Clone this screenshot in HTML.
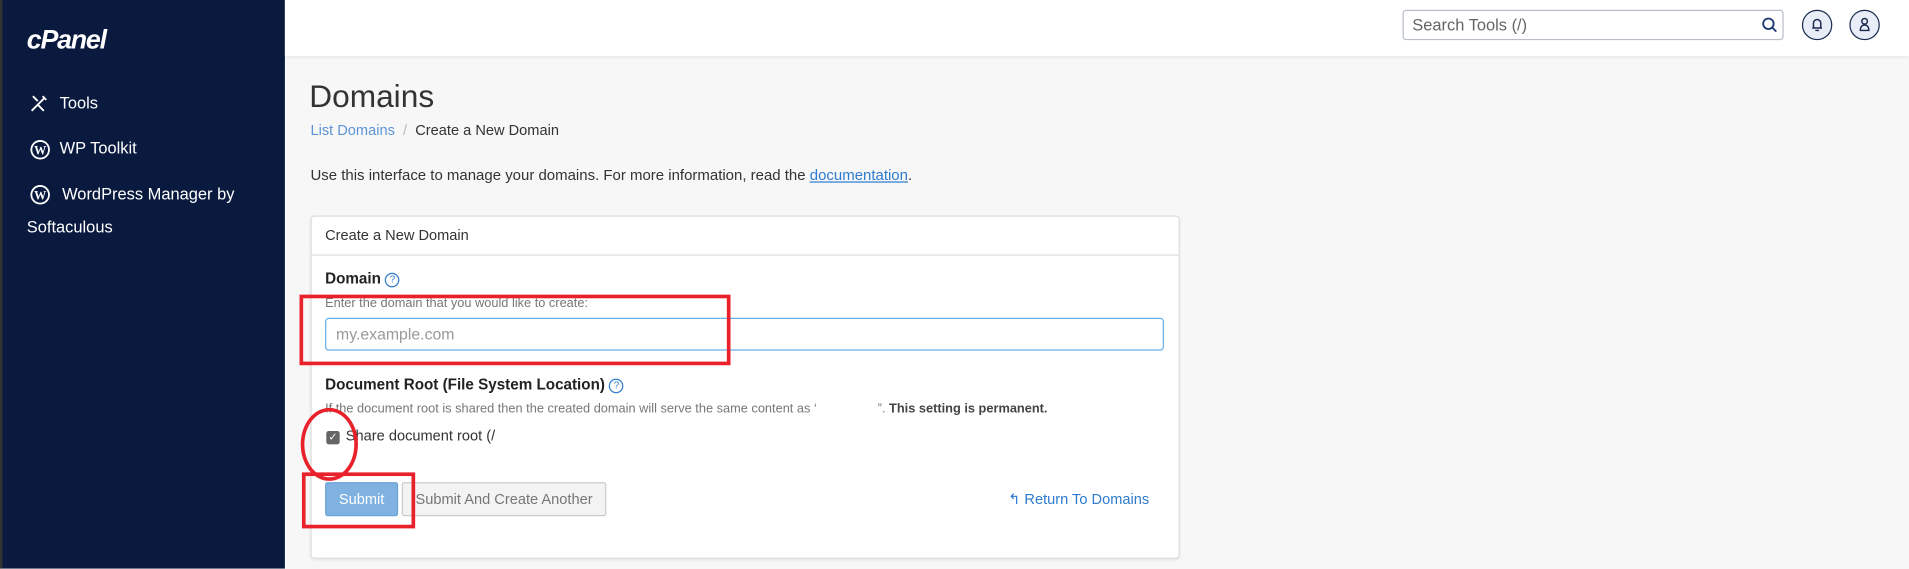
<!DOCTYPE html>
<html><head><meta charset="utf-8"><style>
html,body{margin:0;padding:0;width:1909px;height:568px;overflow:hidden;background:#f7f7f7;font-family:"Liberation Sans",sans-serif;}
#s{position:absolute;left:0;top:0;width:1568px;height:467px;transform:scale(1.2175);transform-origin:0 0;}
.a{position:absolute;white-space:nowrap;}
#side{position:absolute;left:0;top:0;width:234px;height:467px;background:#0a1a3e;border-left:2px solid #333;box-sizing:border-box;}
#hdr{position:absolute;left:234px;top:0;width:1334px;height:46px;background:#fff;box-shadow:0 1px 3px rgba(0,0,0,.08);}
.nav{color:#fff;font-size:13.5px;}
.panel{position:absolute;left:255px;top:177px;width:712px;height:280px;background:#fff;border:1px solid #ddd;border-radius:3px;box-shadow:0 1px 2px rgba(0,0,0,.06);}
.q{display:inline-block;width:10px;height:10px;border:1px solid #2e7bcf;border-radius:50%;font-size:8px;line-height:10px;text-align:center;color:#2e7bcf;font-weight:normal;vertical-align:1px;}
</style></head><body><div id="s">
<div id="side">
<div class="a" style="left:20px;top:20px;color:#fff;font-size:22px;font-weight:bold;font-style:italic;letter-spacing:-1px">cPanel</div>
<svg class="a" style="left:22px;top:77px" width="16" height="16" viewBox="0 0 16 16" fill="none" stroke="#fff" stroke-width="1.5"><path d="M2 14L13 3M3 2l4 4M12 14L7 9M11 2l3 3"/></svg>
<div class="a nav" style="left:47px;top:77px">Tools</div>
<svg class="a" style="left:22px;top:114px" width="18" height="18" viewBox="0 0 18 18"><circle cx="9" cy="9" r="8" fill="#fff"/><circle cx="9" cy="9" r="6.5" fill="#0a1a3e"/><text x="9" y="13" font-size="10" font-weight="bold" fill="#fff" text-anchor="middle" font-family="Liberation Serif">W</text></svg>
<div class="a nav" style="left:47px;top:114px">WP Toolkit</div>
<svg class="a" style="left:22px;top:151px" width="18" height="18" viewBox="0 0 18 18"><circle cx="9" cy="9" r="8" fill="#fff"/><circle cx="9" cy="9" r="6.5" fill="#0a1a3e"/><text x="9" y="13" font-size="10" font-weight="bold" fill="#fff" text-anchor="middle" font-family="Liberation Serif">W</text></svg>
<div class="a nav" style="left:49px;top:152px">WordPress Manager by</div>
<div class="a nav" style="left:20px;top:179px">Softaculous</div>
</div>
<div id="hdr">
<div class="a" style="left:918px;top:8px;width:313px;height:25px;border:1px solid #b8bec8;border-radius:3px;box-sizing:border-box;color:#666;font-size:13.5px;line-height:23px;padding-left:7px">Search Tools (/)</div>
<svg class="a" style="left:1213px;top:14px" width="13" height="13" viewBox="0 0 13 13" fill="none" stroke="#1a3a6e" stroke-width="1.5"><circle cx="5.5" cy="5.5" r="4.3"/><path d="M8.6 8.6L12 12"/></svg>
<div class="a" style="left:1246px;top:8px;width:25px;height:25px;border:1px solid #1a2a4e;border-radius:50%;background:#e9edf8;box-sizing:border-box"></div>
<svg class="a" style="left:1253px;top:14px" width="11" height="12" viewBox="0 0 11 12" fill="none" stroke="#1a2a4e" stroke-width="1.2"><path d="M2.5 9V5a3 3 0 016 0v4M1.5 9h8M4 11h3"/></svg>
<div class="a" style="left:1285px;top:8px;width:25px;height:25px;border:1px solid #1a2a4e;border-radius:50%;background:#e9edf8;box-sizing:border-box"></div>
<svg class="a" style="left:1292px;top:14px" width="11" height="12" viewBox="0 0 11 12" fill="none" stroke="#1a2a4e" stroke-width="1.2"><circle cx="5.5" cy="3.5" r="2.3"/><path d="M2 11c0-3 1.5-4.5 3.5-4.5S9 8 9 11z"/></svg>
</div>
<div class="a" style="left:254px;top:64px;font-size:26px;color:#333">Domains</div>
<div class="a" style="left:255px;top:100px;font-size:12px;color:#333"><span style="color:#5b95d6">List Domains</span> <span style="color:#bbb">&nbsp;/&nbsp;</span> Create a New Domain</div>
<div class="a" style="left:255px;top:137px;font-size:12.3px;color:#333">Use this interface to manage your domains. For more information, read the <span style="color:#2e7bcf;text-decoration:underline">documentation</span>.</div>
<div class="panel">
<div style="height:31px;border-bottom:1px solid #ddd;font-size:12px;color:#333;line-height:31px;padding-left:11px">Create a New Domain</div>
<div class="a" style="left:11px;top:44px;font-size:12.5px;font-weight:bold;color:#222">Domain <span class="q">?</span></div>
<div class="a" style="left:11px;top:65px;font-size:10.5px;color:#777">Enter the domain that you would like to create:</div>
<div class="a" style="left:11px;top:83px;width:689px;height:27px;border:1px solid #66afe9;border-radius:3px;box-sizing:border-box;font-size:13px;color:#999;line-height:25px;padding-left:8px">my.example.com</div>
<div class="a" style="left:11px;top:131px;font-size:12.5px;font-weight:bold;color:#222">Document Root (File System Location) <span class="q">?</span></div>
<div class="a" style="left:11px;top:152px;font-size:10.5px;color:#777">If the document root is shared then the created domain will serve the same content as ‘<span style="display:inline-block;width:50px"></span>”. <b style="color:#444">This setting is permanent.</b></div>
<div class="a" style="left:12px;top:176px;width:11px;height:11px;background:#666;border-radius:2px;color:#fff;font-size:9px;line-height:11px;text-align:center">✓</div>
<div class="a" style="left:28px;top:173px;font-size:12px;color:#333">Share document root (/</div>
<div class="a" style="left:11px;top:218px;width:60px;height:28px;background:#7fb2e0;border:1px solid #6ca3d6;border-radius:2px;box-sizing:border-box;color:#fff;font-size:12px;line-height:26px;text-align:center">Submit</div>
<div class="a" style="left:74px;top:218px;width:168px;height:28px;background:#f3f3f3;border:1px solid #ccc;border-radius:2px;box-sizing:border-box;color:#777;font-size:12px;line-height:26px;text-align:center">Submit And Create Another</div>
<div class="a" style="left:572px;top:225px;font-size:12px;color:#2e7bcf">↰ Return To Domains</div>
</div>
<div class="a" style="left:246px;top:242px;width:354px;height:58px;border:3px solid #e8212a;box-sizing:border-box"></div>
<div class="a" style="left:247px;top:335px;width:47px;height:60px;border:3px solid #e8212a;border-radius:50%;box-sizing:border-box"></div>
<div class="a" style="left:248px;top:388px;width:93px;height:46px;border:3px solid #e8212a;box-sizing:border-box"></div>
</div></body></html>
